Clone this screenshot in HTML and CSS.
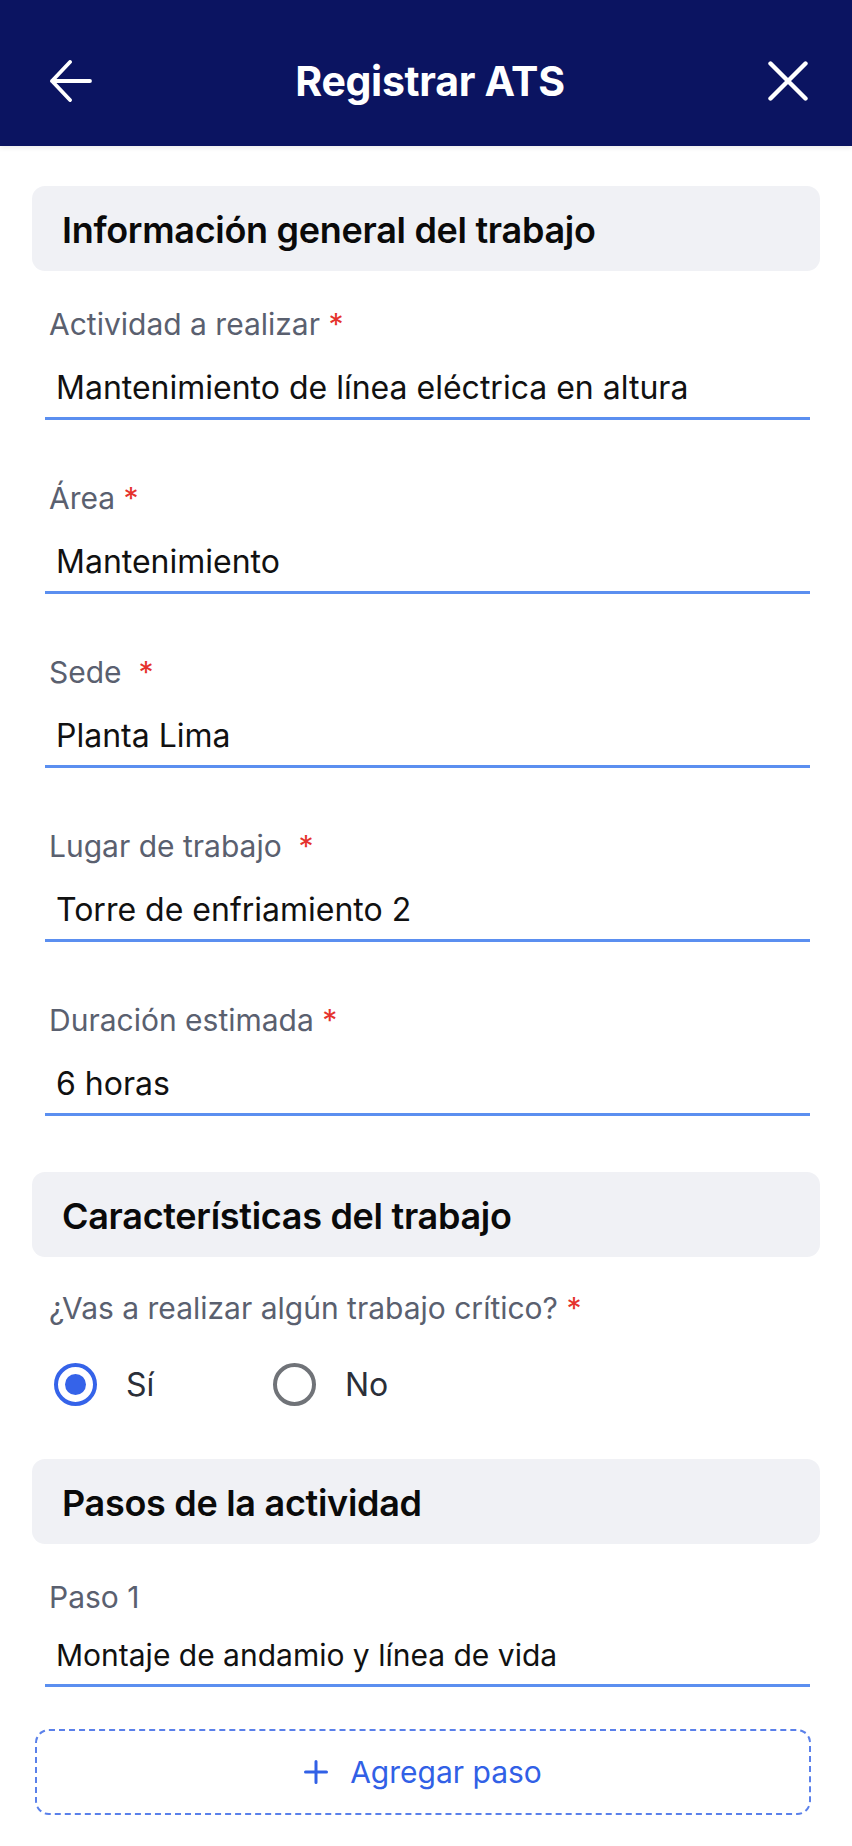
FILE: index.html
```html
<!DOCTYPE html>
<html lang="es">
<head>
<meta charset="utf-8">
<title>Registrar ATS</title>
<link rel="stylesheet" href="styles.css">
</head>
<body>
<header class="appbar">
  <button class="icon-btn" aria-label="Volver">
    <svg width="42" height="42" viewBox="0 0 42 42" fill="none" stroke="#fff" stroke-width="3.8" stroke-linecap="round" stroke-linejoin="round"><path d="M40 21H2M20 2L2 21l18 19"/></svg>
  </button>
  <h1 class="appbar-title">Registrar ATS</h1>
  <button class="icon-btn" aria-label="Cerrar">
    <svg width="40" height="40" viewBox="0 0 40 40" fill="none" stroke="#fff" stroke-width="4.4" stroke-linecap="round"><path d="M2.5 2.5l35 35M37.5 2.5l-35 35"/></svg>
  </button>
</header>

<main class="content">
  <section class="section">
    <h2 class="section-title">Información general del trabajo</h2>
    <div class="field">
      <div class="label">Actividad a realizar <span class="req">*</span></div>
      <div class="input">Mantenimiento de línea eléctrica en altura</div>
    </div>
    <div class="field">
      <div class="label">Área <span class="req">*</span></div>
      <div class="input">Mantenimiento</div>
    </div>
    <div class="field">
      <div class="label">Sede &nbsp;<span class="req">*</span></div>
      <div class="input">Planta Lima</div>
    </div>
    <div class="field">
      <div class="label">Lugar de trabajo &nbsp;<span class="req">*</span></div>
      <div class="input">Torre de enfriamiento 2</div>
    </div>
    <div class="field">
      <div class="label">Duración estimada <span class="req">*</span></div>
      <div class="input">6 horas</div>
    </div>
  </section>

  <section class="section">
    <h2 class="section-title">Características del trabajo</h2>
    <div class="field field-radio">
      <div class="label">¿Vas a realizar algún trabajo crítico? <span class="req">*</span></div>
      <div class="radios">
        <label class="option"><span class="radio checked"></span><span class="option-text">Sí</span></label>
        <label class="option"><span class="radio"></span><span class="option-text">No</span></label>
      </div>
    </div>
  </section>

  <section class="section section-steps">
    <h2 class="section-title">Pasos de la actividad</h2>
    <div class="field field-compact">
      <div class="label">Paso 1</div>
      <div class="input">Montaje de andamio y línea de vida</div>
    </div>
    <button class="add-btn">
      <svg width="24" height="24" viewBox="0 0 24 24" fill="none" stroke="#3160e6" stroke-width="3" stroke-linecap="round"><path d="M12 1.5v21M1.5 12h21"/></svg>
      <span>Agregar paso</span>
    </button>
  </section>
</main>
</body>
</html>
```

FILE: styles.css
```css
* { box-sizing: border-box; }

html, body {
  margin: 0;
  padding: 0;
  background: #ffffff;
  font-family: Inter, "Noto Sans", "Liberation Sans", sans-serif;
}

.appbar {
  height: 146px;
  background: #0b1461;
  display: flex;
  align-items: center;
  justify-content: space-between;
  padding: 16px 44px 0 50px;
  box-shadow: 0 2px 5px rgba(0, 0, 0, 0.08);
}

.icon-btn {
  background: none;
  border: 0;
  padding: 0;
  display: flex;
  align-items: center;
  justify-content: center;
  cursor: pointer;
}

.appbar-title {
  margin: 0;
  color: #ffffff;
  font-size: 41px;
  font-weight: 700;
  letter-spacing: -0.3px;
}

.content {
  padding: 0 32px 40px;
}

.section {
  padding-top: 40px;
}

.section + .section {
  padding-top: 56px;
}

.section-steps {
  padding-top: 53px !important;
}

.section-title {
  margin: 0;
  height: 85px;
  background: #f0f1f5;
  border-radius: 13px;
  padding: 3px 30px 0;
  display: flex;
  align-items: center;
  font-size: 36px;
  font-weight: 600;
  color: #0a0a0a;
  letter-spacing: -0.3px;
}

.field {
  margin: 35px 10px 0 13px;
}

.field + .field {
  margin-top: 60px;
}

.field-radio {
  margin-top: 33px;
}

.label {
  padding-left: 4px;
  font-size: 30px;
  line-height: 36px;
  color: #5a606f;
}

.req {
  color: #e5322d;
}

.input {
  padding: 26px 0 9px 11px;
  font-size: 32px;
  line-height: 40px;
  color: #111111;
  border-bottom: 3px solid #5b8ff0;
}

.field-compact .input {
  padding: 21px 0 9.5px 11px;
  font-size: 30px;
  line-height: 38px;
}

.radios {
  display: flex;
  align-items: center;
  margin-top: 37px;
  padding-left: 9px;
}

.option {
  width: 219px;
  display: flex;
  align-items: center;
  gap: 29px;
}

.radio {
  flex: none;
  width: 43px;
  height: 43px;
  border-radius: 50%;
  border: 4px solid #707378;
  display: flex;
  align-items: center;
  justify-content: center;
}

.radio.checked {
  border-color: #3563e9;
}

.radio.checked::after {
  content: "";
  width: 21px;
  height: 21px;
  border-radius: 50%;
  background: #3563e9;
}

.option-text {
  font-size: 32px;
  color: #2b2f38;
}

.add-btn {
  margin: 42px 9px 0 3px;
  width: calc(100% - 12px);
  height: 86px;
  border: 2px dashed #5a80ea;
  border-radius: 14px;
  background: #ffffff;
  display: flex;
  align-items: center;
  justify-content: center;
  gap: 22px;
  font-family: inherit;
  font-size: 30px;
  color: #3160e6;
  cursor: pointer;
}
```
